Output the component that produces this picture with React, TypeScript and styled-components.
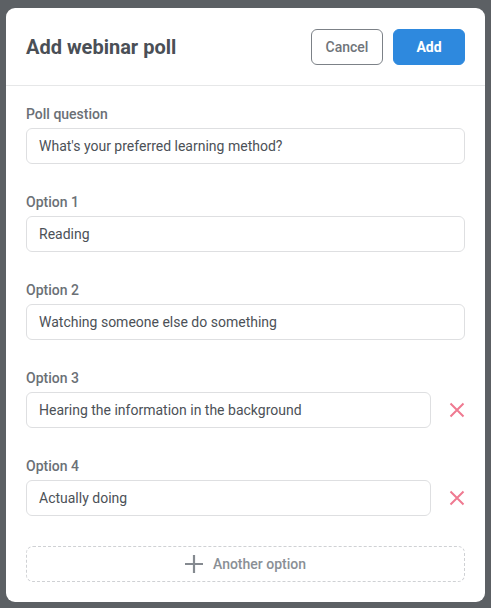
import React from "react";
import styled, { createGlobalStyle } from "styled-components";

const Global = createGlobalStyle`
  html, body { margin: 0; padding: 0; background: #5c6064; }
  body { font-family: Roboto, "Liberation Sans", Arial, sans-serif; }
  * { box-sizing: border-box; }
`;

const Page = styled.div`
  padding: 8px 6px 6px;
  min-height: 608px;
`;

const Modal = styled.div`
  background: #fff;
  border-radius: 9px;
  overflow: hidden;
`;

const Header = styled.div`
  display: flex;
  align-items: center;
  justify-content: space-between;
  height: 78px;
  padding: 0 20px;
  border-bottom: 1px solid #e6e7e8;
`;

const Title = styled.h1`
  margin: 0;
  font-size: 20px;
  font-weight: 700;
  color: #4a4f56;
`;

const Actions = styled.div`
  display: flex;
  gap: 10px;
`;

const Button = styled.button<{ $primary?: boolean }>`
  width: 72px;
  height: 36px;
  border-radius: 6px;
  font-family: inherit;
  font-size: 14px;
  font-weight: ${(p) => (p.$primary ? 700 : 500)};
  border: 1px solid ${(p) => (p.$primary ? "#2e89de" : "#7c8187")};
  background: ${(p) => (p.$primary ? "#2e89de" : "#fff")};
  color: ${(p) => (p.$primary ? "#fff" : "#6f747a")};
  cursor: pointer;
`;

const Body = styled.div`
  display: flex;
  flex-direction: column;
  gap: 28px;
  padding: 18px 20px 20px;
`;

const Field = styled.div`
  display: flex;
  flex-direction: column;
  gap: 4px;
`;

const Label = styled.label`
  font-size: 14px;
  line-height: 20px;
  font-weight: 500;
  color: #6b7076;
`;

const Row = styled.div`
  display: flex;
  align-items: center;
  gap: 18px;
`;

const Input = styled.div`
  flex: 1;
  height: 36px;
  display: flex;
  align-items: center;
  padding: 0 12px;
  border: 1px solid #dedfe1;
  border-radius: 6px;
  font-size: 14px;
  color: #4c5157;
`;

const RemoveButton = styled.button`
  width: 16px;
  height: 16px;
  padding: 0;
  border: none;
  background: none;
  display: flex;
  align-items: center;
  justify-content: center;
  cursor: pointer;
`;

const AddOption = styled.button`
  margin-top: 2px;
  height: 36px;
  display: flex;
  align-items: center;
  justify-content: center;
  gap: 10px;
  border: 1px dashed #cfd1d4;
  border-radius: 7px;
  background: #fff;
  font-family: inherit;
  font-size: 14px;
  font-weight: 500;
  color: #8a8f95;
  cursor: pointer;
`;

const Cross = () => (
  <svg width="16" height="16" viewBox="0 0 16 16">
    <path d="M1.5 1.5 L14.5 14.5 M14.5 1.5 L1.5 14.5" stroke="#ef7a91" strokeWidth="2" strokeLinecap="butt" />
  </svg>
);

const Plus = () => (
  <svg width="18" height="18" viewBox="0 0 18 18">
    <path d="M9 0 V18 M0 9 H18" stroke="#858a90" strokeWidth="2.2" />
  </svg>
);

const fields: { label: string; value: string; removable?: boolean }[] = [
  { label: "Poll question", value: "What's your preferred learning method?" },
  { label: "Option 1", value: "Reading" },
  { label: "Option 2", value: "Watching someone else do something" },
  { label: "Option 3", value: "Hearing the information in the background", removable: true },
  { label: "Option 4", value: "Actually doing", removable: true },
];

export default function App() {
  return (
    <>
      <Global />
      <Page>
        <Modal>
          <Header>
            <Title>Add webinar poll</Title>
            <Actions>
              <Button>Cancel</Button>
              <Button $primary>Add</Button>
            </Actions>
          </Header>
          <Body>
            {fields.map((f) => (
              <Field key={f.label}>
                <Label>{f.label}</Label>
                <Row>
                  <Input>{f.value}</Input>
                  {f.removable && (
                    <RemoveButton aria-label="Remove option">
                      <Cross />
                    </RemoveButton>
                  )}
                </Row>
              </Field>
            ))}
            <AddOption>
              <Plus />
              Another option
            </AddOption>
          </Body>
        </Modal>
      </Page>
    </>
  );
}
